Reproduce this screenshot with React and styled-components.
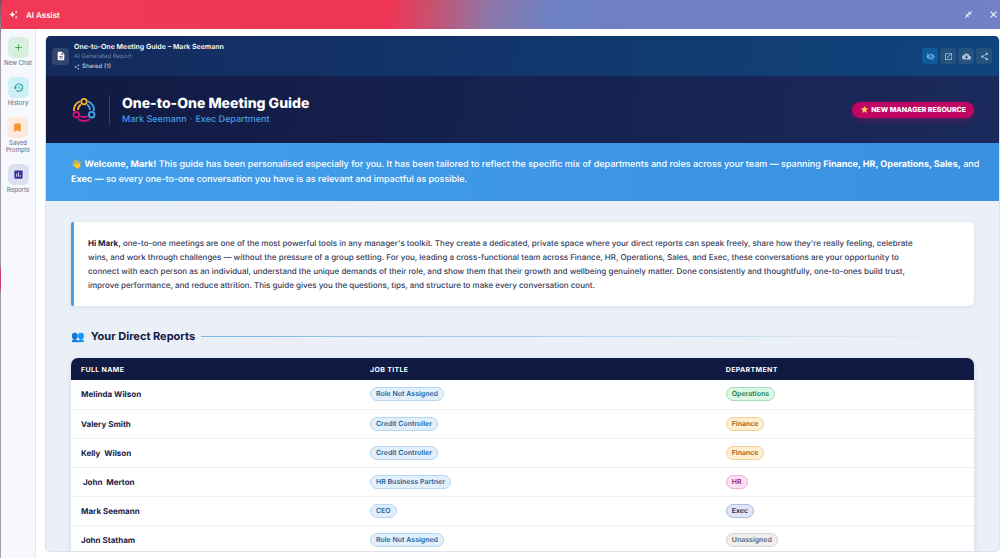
import styled, { createGlobalStyle } from "styled-components";
import {
  MdAdd,
  MdAssessment,
  MdAutoAwesome,
  MdBookmark,
  MdClose,
  MdCloseFullscreen,
  MdCloudDownload,
  MdDescription,
  MdHistory,
  MdOpenInNew,
  MdShare,
  MdStar,
  MdVisibilityOff,
} from "react-icons/md";

const GlobalStyle = createGlobalStyle`
  * {
    box-sizing: border-box;
  }

  body {
    margin: 0;
    background: #fff;
    color: #1b2145;
    font-family: Inter, "Liberation Sans", sans-serif;
    font-size: 9px;
    text-rendering: geometricPrecision;
  }

  button {
    padding: 0;
    border: 0;
    background: none;
    font: inherit;
    cursor: pointer;
  }
`;

const Page = styled.div`
  display: flex;
  flex-direction: column;
  height: 100vh;
  padding-left: 1px;
  overflow: hidden;
  background: linear-gradient(#7a4a60 0, #a3a0aa 8%, #a3a0aa 47%, #c93a66 49%, #c93a66 51%, #a3a0aa 53%);
`;

const TopBar = styled.header`
  display: flex;
  align-items: center;
  flex: none;
  gap: 8px;
  height: 29px;
  padding: 0 1px 0 8px;
  border-top-left-radius: 4px;
  color: #fff;
  background: linear-gradient(
    97deg,
    #f13857 0%,
    #ef3656 39%,
    #c9506f 43%,
    #8c78aa 49%,
    #6d80c2 55%,
    #6f7fc4 75%,
    #7280c6 100%
  );
`;

const AppName = styled.h1`
  flex: 1;
  margin: 0;
  font-size: 8px;
  font-weight: 600;
`;

const WindowButton = styled.button`
  display: flex;
  margin-left: 7px;
  color: #fff;
`;

const Main = styled.div`
  display: flex;
  flex: 1;
  min-height: 0;
  background: #fff;
`;

const Sidebar = styled.nav`
  display: flex;
  flex-direction: column;
  align-items: center;
  flex: none;
  gap: 11px;
  width: 35px;
  padding-top: 8px;
  border-right: 1px solid #e2e6ee;
  background: #f6f8fd;
`;

const NavButton = styled.button`
  display: flex;
  flex-direction: column;
  align-items: center;
  color: #737c8e;
  font-size: 6px;
  font-weight: 500;
  line-height: 7px;
`;

const NavIcon = styled.span`
  display: flex;
  align-items: center;
  justify-content: center;
  width: 21px;
  height: 21px;
  margin-bottom: 1px;
  border-radius: 6px;
  color: ${(props) => props.$color};
  background: ${(props) => props.$background};
`;

const Content = styled.main`
  display: flex;
  flex: 1;
  min-width: 0;
  padding: 7px 0 6px 9px;
`;

const Report = styled.article`
  display: flex;
  flex-direction: column;
  flex: 1;
  min-width: 0;
  overflow: hidden;
  border: 1px solid #dde2ee;
  border-top: 0;
  border-radius: 5px;
  background: #ebeff8;
`;

const ReportBar = styled.div`
  display: flex;
  align-items: center;
  flex: none;
  gap: 5px;
  height: 40px;
  padding: 0 7px 0 6px;
  color: #fff;
  background: linear-gradient(100deg, #142a5c 0%, #12356b 45%, #0f457c 100%);
`;

const FileIcon = styled.span`
  display: flex;
  align-items: center;
  justify-content: center;
  width: 17px;
  height: 17px;
  border-radius: 4px;
  background: rgba(255, 255, 255, 0.13);
`;

const FileInfo = styled.div`
  flex: 1;
  padding-top: 2px;
  font-size: 6px;
  line-height: 10px;
`;

const FileName = styled.div`
  font-size: 7px;
  font-weight: 600;
`;

const FileKind = styled.div`
  color: #6c80a8;
`;

const Shared = styled.div`
  display: flex;
  align-items: center;
  gap: 2px;
  color: #c0cbdf;
  font-weight: 500;
`;

const Actions = styled.div`
  display: flex;
  gap: 2px;
`;

const ActionButton = styled.button`
  display: flex;
  align-items: center;
  justify-content: center;
  width: 16px;
  height: 16px;
  border-radius: 3px;
  color: ${(props) => (props.$active ? "#5fb8f5" : "#b3c8dc")};
  background: ${(props) => (props.$active ? "#105a9c" : "#25527f")};
`;

const Hero = styled.div`
  display: flex;
  align-items: center;
  flex: none;
  height: 67px;
  padding: 0 25px;
  background: linear-gradient(100deg, #111a42, #1a2a5c);
`;

const LogoBox = styled.div`
  display: flex;
  margin-right: 12px;
  padding: 2px 12px 2px 0;
  border-right: 1px solid #37406a;
`;

const HeroText = styled.div`
  flex: 1;
  padding-top: 3px;
`;

const Title = styled.h2`
  margin: 0;
  color: #fff;
  font-size: 14px;
  font-weight: 800;
  line-height: 18px;
`;

const Subtitle = styled.p`
  display: flex;
  gap: 3px;
  margin: 0;
  color: #459ee8;
  font-size: 9px;
  font-weight: 500;
  line-height: 14px;
`;

const Dot = styled.span`
  color: #3f5f94;
`;

const Badge = styled.span`
  display: flex;
  align-items: center;
  gap: 2px;
  height: 16px;
  padding: 0 8px;
  border-radius: 8px;
  color: #fff;
  background: #c00562;
  box-shadow: 0 2px 6px rgba(192, 5, 98, 0.4);
  font-size: 7px;
  font-weight: 800;
`;

const Welcome = styled.p`
  flex: none;
  margin: 0;
  padding: 14px 14px 14px 25px;
  color: #fff;
  background: linear-gradient(100deg, #429fec, #3990e0);
  font-size: 9px;
  font-weight: 500;
  line-height: 15px;

  strong {
    font-weight: 700;
  }
`;

const Body = styled.div`
  flex: 1;
  min-height: 0;
  padding: 21px 25px 0;
  overflow: hidden;
`;

const Intro = styled.p`
  margin: 0 0 22px;
  padding: 14px;
  border-left: 3px solid #4a9ce3;
  border-radius: 2px 6px 6px 2px;
  background: #fff;
  box-shadow: 0 1px 4px rgba(27, 42, 92, 0.08);
  color: #353b5c;
  font-size: 8px;
  font-weight: 500;
  line-height: 14px;

  strong {
    color: #141a42;
  }
`;

const SectionTitle = styled.h3`
  display: flex;
  align-items: center;
  gap: 6px;
  margin: 0 0 13px;
  color: #111a42;
  font-size: 11px;
  font-weight: 700;
  line-height: 17px;

  &::after {
    content: "";
    flex: 1;
    height: 1px;
    background: linear-gradient(90deg, #7db7e6, #ebeff8);
  }
`;

const TableCard = styled.div`
  overflow: hidden;
  border-radius: 7px 7px 0 0;
  background: #fff;
  box-shadow: 0 1px 5px rgba(27, 42, 92, 0.12);
`;

const Table = styled.table`
  width: 100%;
  border-collapse: collapse;
  table-layout: fixed;
`;

const Th = styled.th`
  width: ${(props) => props.$width};
  height: 22px;
  padding: 0 10px;
  color: #fff;
  background: #111a42;
  font-size: 7px;
  font-weight: 700;
  letter-spacing: 0.05em;
  text-align: left;
  text-transform: uppercase;
`;

const Td = styled.td`
  height: 29px;
  padding: 0 10px;
  border-bottom: 1px solid #eceff5;
  font-size: 8px;
  font-weight: 700;
  white-space: pre;
`;

const tones = {
  blue: ["#2a6395", "#e1f0fc", "#b5d6f0"],
  green: ["#2c7a48", "#dcf8e5", "#a5dcb8"],
  orange: ["#925f1d", "#ffefd2", "#f0cf98"],
  pink: ["#9b1c70", "#fddff3", "#eeb0d9"],
  navy: ["#1b2a5c", "#dfe6f8", "#adbbdf"],
  grey: ["#666", "#eee", "#d5d5d5"],
};

const Pill = styled.span`
  display: inline-block;
  padding: 0 5px;
  border: 1px solid ${(props) => tones[props.$tone][2]};
  border-radius: 7px;
  color: ${(props) => tones[props.$tone][0]};
  background: ${(props) => tones[props.$tone][1]};
  font-size: 7px;
  font-weight: 600;
  line-height: 12px;
  vertical-align: middle;
`;

const navItems = [
  { label: ["New Chat"], icon: MdAdd, color: "#4aa653", background: "#d8f0db" },
  { label: ["History"], icon: MdHistory, color: "#1b9a98", background: "#cdf0f7" },
  { label: ["Saved", "Prompts"], icon: MdBookmark, color: "#f3922b", background: "#fcebdd" },
  { label: ["Reports"], icon: MdAssessment, color: "#3531a0", background: "#dddff3" },
];

const people = [
  { name: "Melinda Wilson", job: "Role Not Assigned", department: "Operations", tone: "green" },
  { name: "Valery Smith", job: "Credit Controller", department: "Finance", tone: "orange" },
  { name: "Kelly  Wilson", job: "Credit Controller", department: "Finance", tone: "orange" },
  { name: " John  Merton", job: "HR Business Partner", department: "HR", tone: "pink" },
  { name: "Mark Seemann", job: "CEO", department: "Exec", tone: "navy" },
  { name: "John Statham", job: "Role Not Assigned", department: "Unassigned", tone: "grey" },
];

const Logo = () => (
  <svg width="26" height="26" viewBox="0 0 26 26" fill="none" strokeWidth="1.8">
    <path d="M2.9 14A10.2 10.2 0 0 1 9 4.2M7 13A6.5 6.5 0 0 1 10 7.6" stroke="#f5b02e" />
    <path d="M17 4.2A10.2 10.2 0 0 1 23 14M16 7.6A6.5 6.5 0 0 1 19 13" stroke="#3fa9e8" />
    <path d="M18.5 22.2A10.2 10.2 0 0 1 7.5 22.2M16.5 18.9A6.5 6.5 0 0 1 9.5 18.9" stroke="#d6127c" />
    <circle cx="13" cy="4.6" r="2.8" stroke="#f5b02e" />
    <circle cx="20.7" cy="17.7" r="2.8" stroke="#3fa9e8" />
    <circle cx="5.3" cy="17.7" r="2.8" stroke="#d6127c" />
  </svg>
);

const App = () => {
  return (
    <Page>
      <GlobalStyle />
      <TopBar>
        <MdAutoAwesome size={9} />
        <AppName>AI Assist</AppName>
        <WindowButton aria-label="Exit full screen">
          <MdCloseFullscreen size={9} />
        </WindowButton>
        <WindowButton aria-label="Close">
          <MdClose size={11} />
        </WindowButton>
      </TopBar>
      <Main>
        <Sidebar>
          {navItems.map(({ label, icon: Icon, color, background }) => (
            <NavButton key={label[0]}>
              <NavIcon $color={color} $background={background}>
                <Icon size={11} />
              </NavIcon>
              {label.map((line) => (
                <span key={line}>{line}</span>
              ))}
            </NavButton>
          ))}
        </Sidebar>
        <Content>
          <Report>
            <ReportBar>
              <FileIcon>
                <MdDescription size={10} />
              </FileIcon>
              <FileInfo>
                <FileName>One-to-One Meeting Guide – Mark Seemann</FileName>
                <FileKind>AI Generated Report</FileKind>
                <Shared>
                  <MdShare size={6} /> Shared (1)
                </Shared>
              </FileInfo>
              <Actions>
                <ActionButton $active aria-label="Hide">
                  <MdVisibilityOff size={9} />
                </ActionButton>
                <ActionButton aria-label="Open in new tab">
                  <MdOpenInNew size={9} />
                </ActionButton>
                <ActionButton aria-label="Download">
                  <MdCloudDownload size={9} />
                </ActionButton>
                <ActionButton aria-label="Share">
                  <MdShare size={9} />
                </ActionButton>
              </Actions>
            </ReportBar>
            <Hero>
              <LogoBox>
                <Logo />
              </LogoBox>
              <HeroText>
                <Title>One-to-One Meeting Guide</Title>
                <Subtitle>
                  Mark Seemann <Dot>·</Dot> Exec Department
                </Subtitle>
              </HeroText>
              <Badge>
                <MdStar size={9} color="#ffcf5c" /> NEW MANAGER RESOURCE
              </Badge>
            </Hero>
            <Welcome>
              👋 <strong>Welcome, Mark!</strong> This guide has been personalised especially for
              you. It has been tailored to reflect the specific mix of departments and roles across
              your team — spanning <strong>Finance, HR, Operations, Sales,</strong> and
              <br />
              <strong>Exec</strong> — so every one-to-one conversation you have is as relevant and
              impactful as possible.
            </Welcome>
            <Body>
              <Intro>
                <strong>Hi Mark,</strong> one-to-one meetings are one of the most powerful tools in
                any manager's toolkit. They create a dedicated, private space where your direct
                reports can speak freely, share how they're really feeling, celebrate
                <br />
                wins, and work through challenges — without the pressure of a group setting. For
                you, leading a cross-functional team across Finance, HR, Operations, Sales, and
                Exec, these conversations are your opportunity to
                <br />
                connect with each person as an individual, understand the unique demands of their
                role, and show them that their growth and wellbeing genuinely matter. Done
                consistently and thoughtfully, one-to-ones build trust,
                <br />
                improve performance, and reduce attrition. This guide gives you the questions, tips,
                and structure to make every conversation count.
              </Intro>
              <SectionTitle>
                <span>👥</span> Your Direct Reports
              </SectionTitle>
              <TableCard>
                <Table>
                  <thead>
                    <tr>
                      <Th $width="32%">Full Name</Th>
                      <Th $width="39.4%">Job Title</Th>
                      <Th>Department</Th>
                    </tr>
                  </thead>
                  <tbody>
                    {people.map((person) => (
                      <tr key={person.name}>
                        <Td>{person.name}</Td>
                        <Td>
                          <Pill $tone="blue">{person.job}</Pill>
                        </Td>
                        <Td>
                          <Pill $tone={person.tone}>{person.department}</Pill>
                        </Td>
                      </tr>
                    ))}
                  </tbody>
                </Table>
              </TableCard>
            </Body>
          </Report>
        </Content>
      </Main>
    </Page>
  );
};

export default App;
